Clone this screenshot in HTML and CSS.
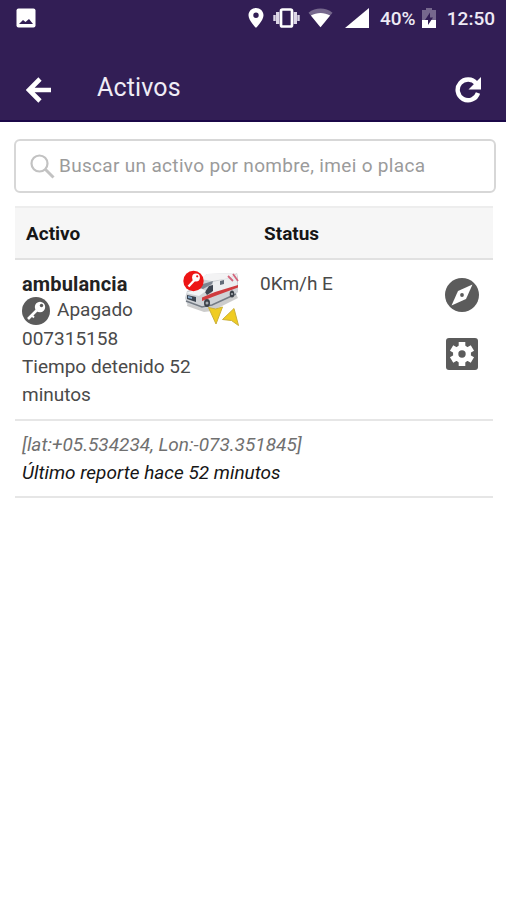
FILE: index.html
```html
<!DOCTYPE html>
<html lang="es">
<head>
<meta charset="utf-8">
<title>Activos</title>
<link rel="stylesheet" href="styles.css">
</head>
<body>
<header class="top">
  <div class="statusbar">
    <svg class="i-image" viewBox="0 0 20 20"><rect x="0.5" y="0.5" width="19" height="19" rx="2" fill="#fff"/><path d="M3 16l4-4 2.500 2L13 11l4 5z" fill="#321e55"/></svg>
    <svg class="i-pin" viewBox="0 0 16 20"><path fill="#fff" fill-rule="evenodd" d="M8 0C3.800 0 .5 3.200.5 7.300.5 12.500 8 20 8 20s7.500-7.500 7.500-12.700C15.500 3.200 12.200 0 8 0zm0 4.500a2.700 2.700 0 1 1 0 5.400 2.700 2.700 0 0 1 0-5.400z"/></svg>
    <svg class="i-vibrate" viewBox="0 0 27 20"><rect x="8" y="1.500" width="11" height="17" rx="1.500" fill="none" stroke="#fff" stroke-width="2.700"/><path d="M4.700 4v12M22.300 4v12" stroke="#dcd6e6" stroke-width="3.400"/><path d="M1.500 7v6M25.500 7v6" stroke="#dcd6e6" stroke-width="2.400"/></svg>
    <svg class="i-wifi" viewBox="0 0 26 20"><path d="M13 19.500L.5 4.500C8-1.200 18-1.200 25.500 4.500z" fill="#76688d"/><path d="M13 19.500L3 7.500C9 4 17 4 23 7.500z" fill="#fff"/></svg>
    <svg class="i-signal" viewBox="0 0 24 20"><path d="M24 0v20H0z" fill="#fff"/></svg>
    <span class="battery-text">40%</span>
    <svg class="i-battery" viewBox="0 0 14 20"><path d="M4 0h6v2h4v18H0V2h4z" fill="#76688d"/><path d="M0 12h14v8H0z" fill="#fff"/><path d="M8 4.500l-5 7.500h3v5l5-7.500H8z" fill="#321e55"/></svg>
    <span class="clock">12:50</span>
  </div>
  <div class="toolbar">
    <svg class="i-back" viewBox="0 0 26 26"><path d="M25 13H3M14 2L3 13l11 11" fill="none" stroke="#fff" stroke-width="4.600"/></svg>
    <h1 class="title">Activos</h1>
    <svg class="i-refresh" viewBox="0 0 26 26"><path d="M23 16a10.400 10.400 0 1 1-1.700-9.500" fill="none" stroke="#fff" stroke-width="4.400"/><path d="M26 0v12.500H13.500z" fill="#fff"/></svg>
  </div>
</header>
<main class="content">
  <div class="search">
    <svg class="i-search" viewBox="0 0 25 25"><circle cx="9.500" cy="9.500" r="8" fill="none" stroke="#c2c2c2" stroke-width="2.200"/><path d="M15.500 15.500L23.500 23.500" stroke="#c2c2c2" stroke-width="3"/></svg>
    <span class="placeholder">Buscar un activo por nombre, imei o placa</span>
  </div>
  <section class="table">
    <div class="thead"><span>Activo</span><span class="th-status">Status</span></div>
    <div class="row">
      <div class="asset">
        <div class="name">ambulancia</div>
        <div class="state">
          <svg class="i-key" viewBox="0 0 28 28"><circle cx="14" cy="14" r="14" fill="#5b5b5b"/><path d="M16 12L6 22" stroke="#fff" stroke-width="2.600"/><path d="M9.500 18l2.500 2.500" stroke="#fff" stroke-width="2"/><circle cx="18" cy="10" r="5.200" fill="#fff"/><circle cx="19.500" cy="8.500" r="1.700" fill="#5b5b5b"/></svg>
          <span class="state-text">Apagado</span>
        </div>
        <div class="imei">007315158</div>
        <div class="stopped">Tiempo detenido 52<br>minutos</div>
      </div>
      <svg class="i-ambulance" viewBox="0 0 58 60">
        <path d="M4 36l17 6 8-1 26-13-2-4-48 8z" fill="#999" opacity=".5"/>
        <path d="M17 10L24 4l30-1 1 4v15l-4 4-22 10-7 3L4 34 2 28l2-7 13-5z" fill="#cfd2d6"/>
        <path d="M17 9L24 4l30-1-7 5-18 3z" fill="#f3f3f4"/>
        <path d="M30 12l17-4 7-4v12l-20 7-5 1z" fill="#eceef0"/>
        <path d="M20 14l10-3-1 3-9 5-4-1z" fill="#7c8590"/>
        <path d="M22 22l4-6 4-1v6l-6 4z" fill="#3c4450"/>
        <path d="M37 11l4-1v4l-4 1z" fill="#626c79"/>
        <path d="M3 23l14-5 6 3-7 5z" fill="#f2f4f6"/>
        <path d="M4 25l9 2v5l-9-3z" fill="#39424e"/>
        <path d="M5 26l4 1v2l-4-1z" fill="#84a5c6"/>
        <path d="M19 27.500L32 22l23-7v2.500L32 26l-13 5z" fill="#cf3b3f"/>
        <path d="M45 6l5 5M50 4l5 7" stroke="#d4667c" stroke-width="1.800"/>
        <path d="M3 31l16 6 10-2 24-11" fill="none" stroke="#747b84" stroke-width="1.600"/>
        <ellipse cx="24" cy="33" rx="3" ry="4" fill="#3b4048"/><circle cx="24" cy="33" r="1.500" fill="#a8adb3"/>
        <ellipse cx="49" cy="24" rx="2.300" ry="3.500" fill="#3b4048"/><circle cx="49" cy="24" r="1.100" fill="#a8adb3"/>
        <circle cx="10.500" cy="11" r="10.200" fill="#ed1515"/>
        <path d="M12 9.500L5.500 16.500" stroke="#fff" stroke-width="2.400"/><circle cx="13" cy="7.500" r="3.900" fill="#fff"/><circle cx="14.200" cy="6.300" r="1.100" fill="#ed1515"/>
        <path d="M25.500 37.500l7 1.500 7-2-6.500 17z" fill="#f0cc22" stroke="#cbb039"/>
        <path d="M39.500 49.500l11.500-11 4.500 17-7-5z" fill="#f0cc22" stroke="#cbb039"/>
      </svg>
      <div class="speed">0Km/h E</div>
      <div class="actions">
        <svg class="i-compass" viewBox="0 0 34 34"><circle cx="17" cy="17" r="17" fill="#5b5b5b"/><path d="M27.500 6.500L21 21 6.500 27.500 13 13z" fill="#fff"/><circle cx="17" cy="17" r="1.900" fill="#5b5b5b"/></svg>
        <svg class="i-gear" viewBox="0 0 32 32"><rect width="32" height="32" rx="3" fill="#5b5b5b"/><circle cx="16" cy="16" r="9" fill="#fff"/><path d="M16 4v24M5.600 10l20.800 12M5.600 22l20.800-12" stroke="#fff" stroke-width="6.600"/><circle cx="16" cy="16" r="3.700" fill="#5b5b5b"/></svg>
      </div>
    </div>
    <div class="report">
      <div class="coords">[lat:+05.534234, Lon:-073.351845]</div>
      <div class="last">Último reporte hace 52 minutos</div>
    </div>
  </section>
</main>
</body>
</html>
```
FILE: styles.css
```css
* { box-sizing: border-box; }
body {
  margin: 0;
  background: #fff;
  color: #4a4a4a;
  font: 19px/28px Roboto, sans-serif;
}
svg { display: block; flex: none; }
.top { height: 122px; background: #321e55; border-bottom: 2px solid #1b0848; color: #fff; }
.statusbar { height: 55px; padding: 8px 11px 0 16px; display: flex; align-items: flex-start; }
.i-image { width: 20px; height: 20px; }
.i-pin { width: 16px; height: 20px; margin-left: 212px; }
.i-vibrate { width: 27px; height: 20px; margin-left: 9px; }
.i-wifi { width: 25px; height: 20px; margin-left: 8px; }
.i-signal { width: 24px; height: 20px; margin-left: 12px; }
.battery-text, .clock { font-weight: 500; font-size: 19px; line-height: 21px; color: #eeeaf5; white-space: nowrap; }
.battery-text { width: 37px; margin-left: 11px; }
.i-battery { width: 14px; height: 20px; margin-left: 5px; }
.clock { margin-left: auto; }
.toolbar { height: 65px; display: flex; align-items: center; padding: 5px 25px 0 26px; }
.i-back { width: 26px; height: 26px; }
.title { margin: -4px 0 0 45px; font-size: 25px; line-height: 30px; font-weight: 400; letter-spacing: .15px; color: #f0ecf6; }
.i-refresh { width: 26px; height: 26px; margin-left: auto; }
.content { padding: 17px 10px 0 14px; }
.search { height: 54px; border: 2px solid #d7d7d7; border-radius: 6px; display: flex; align-items: center; padding-left: 14px; }
.i-search { width: 25px; height: 25px; margin-top: 1px; }
.placeholder { margin: 0 0 0 4px; color: #9b9b9b; letter-spacing: .32px; white-space: nowrap; }
.table { margin: 13px 3px 0 1px; }
.thead { height: 54px; background: #f6f6f6; border-top: 2px solid #ededed; border-bottom: 2px solid #e1e1e1; display: grid; grid-template-columns: 238px 1fr; align-items: center; padding: 2px 0 0 11px; color: #161616; font-weight: 700; }
.row { height: 161px; border-bottom: 2px solid #e6e6e6; display: grid; grid-template-columns: 161px 77px 1fr 34px; padding: 10px 14px 0 7px; align-items: start; }
.asset { white-space: nowrap; }
.name { font-weight: 700; color: #222; font-size: 20px; height: 27px; letter-spacing: .15px; }
.state { display: flex; align-items: center; height: 28px; }
.i-key { width: 28px; height: 28px; }
.state-text { margin: -2px 0 0 7px; }
.i-ambulance { width: 58px; height: 60px; }
.speed { white-space: nowrap; }
.actions { display: grid; gap: 26px; justify-items: center; padding-top: 8px; }
.i-compass { width: 34px; height: 34px; }
.i-gear { width: 32px; height: 32px; }
.report { height: 77px; border-bottom: 2px solid #e6e6e6; padding: 10px 7px 0; font-style: italic; }
.coords { color: #707070; }
.last { color: #161616; }
```
